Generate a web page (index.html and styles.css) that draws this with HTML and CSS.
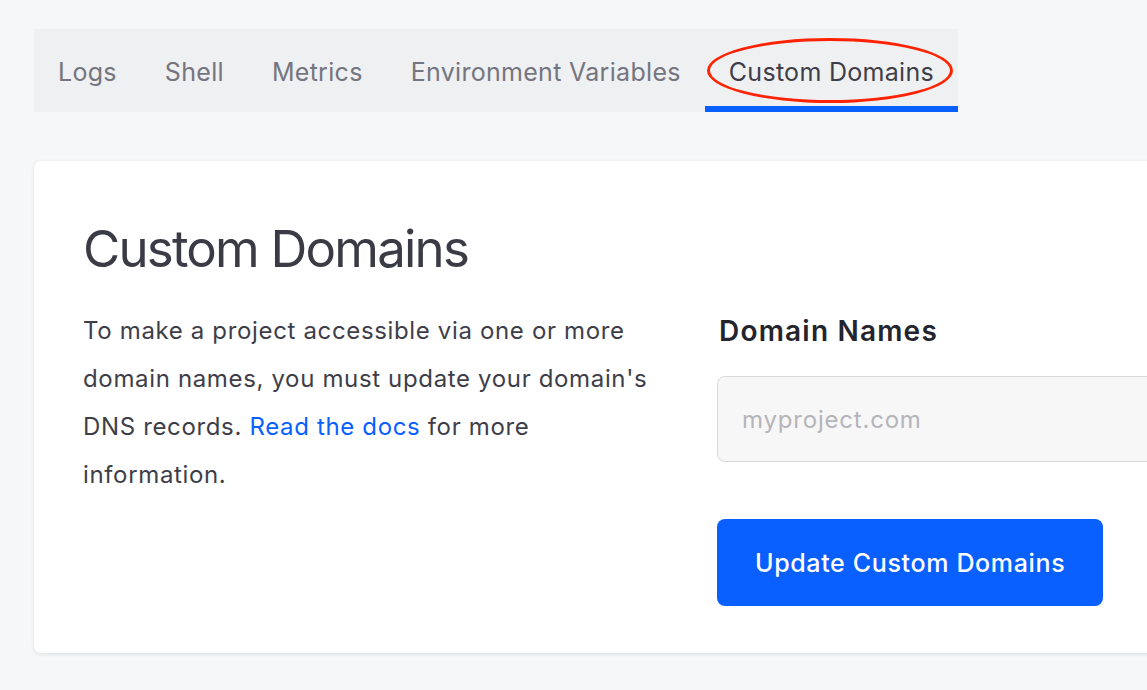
FILE: index.html
```html
<!DOCTYPE html>
<html lang="en">
<head>
<meta charset="utf-8">
<title>Custom Domains</title>
<link rel="stylesheet" href="styles.css">
</head>
<body>
<div class="page">
  <nav class="tabs">
    <a class="tab">Logs</a>
    <a class="tab">Shell</a>
    <a class="tab">Metrics</a>
    <a class="tab">Environment Variables</a>
    <a class="tab active">Custom Domains<span class="annot"></span></a>
  </nav>
  <section class="card">
    <h1 class="title">Custom Domains</h1>
    <div class="cols">
      <p class="desc">To make a project accessible via one or more domain names, you must update your domain's DNS records. <a class="link">Read the docs</a> for more information.</p>
      <div class="form">
        <label class="label">Domain Names</label>
        <div class="input"><span class="placeholder">myproject.com</span></div>
        <button class="btn">Update Custom Domains</button>
      </div>
    </div>
  </section>
</div>
</body>
</html>
```

FILE: styles.css
```css
html, body {
  margin: 0;
  padding: 0;
  background: #f6f7f9;
  overflow: hidden;
  width: 1147px;
  height: 690px;
}
body {
  font-family: Inter, "Noto Sans", "Liberation Sans", sans-serif;
  color: #3e3e49;
}
.page {
  padding: 29px 0 0 34px;
}
.tabs {
  display: inline-flex;
  background: #eff0f2;
  height: 83px;
}
.tab {
  position: relative;
  padding: 0 24px;
  font-size: 25px;
  letter-spacing: 0.3px;
  line-height: 86px;
  color: #75757f;
  white-space: nowrap;
}
.tab.active {
  color: #3e3e49;
  box-shadow: inset 0 -6px 0 #0a60ff;
}
.annot {
  position: absolute;
  left: 2px;
  top: 9px;
  width: 240px;
  height: 59px;
  border: 3.5px solid #ff2200;
  border-radius: 50%;
}
.card {
  margin-top: 49px;
  width: 1317px;
  height: 492px;
  box-sizing: border-box;
  background: #fff;
  border-radius: 7px;
  box-shadow: 0 1px 4px rgba(0,0,0,0.10);
  padding: 48px 48px 0 49px;
}
.title {
  margin: 0;
  font-size: 51px;
  font-weight: 400;
  line-height: 80px;
  color: #3b3b46;
  letter-spacing: -1.8px;
}
.cols {
  display: grid;
  grid-template-columns: 586px 586px;
  column-gap: 48px;
  margin-top: 18px;
}
.desc {
  margin: 0;
  font-size: 24px;
  letter-spacing: 0.65px;
  line-height: 48px;
  color: #3e3e49;
}
.link {
  color: #0a60ff;
}
.form {
  display: flex;
  flex-direction: column;
  align-items: flex-start;
}
.label {
  font-size: 28px;
  font-weight: 600;
  letter-spacing: 1.2px;
  color: #24242e;
  line-height: 48px;
  margin-left: 2px;
}
.input {
  margin-top: 21px;
  width: 586px;
  height: 86px;
  box-sizing: border-box;
  border: 1px solid #d8d8dc;
  border-radius: 8px;
  background: #f7f7f8;
  display: flex;
  align-items: center;
  padding-left: 24px;
}
.placeholder {
  font-size: 24px;
  letter-spacing: 0.8px;
  color: #b5b5ba;
}
.btn {
  margin-top: 57px;
  height: 87px;
  padding: 0 38px;
  border: none;
  border-radius: 8px;
  background: #0a60ff;
  color: #fff;
  font-family: inherit;
  font-size: 25px;
  letter-spacing: 0.65px;
  font-weight: 500;
}
```
